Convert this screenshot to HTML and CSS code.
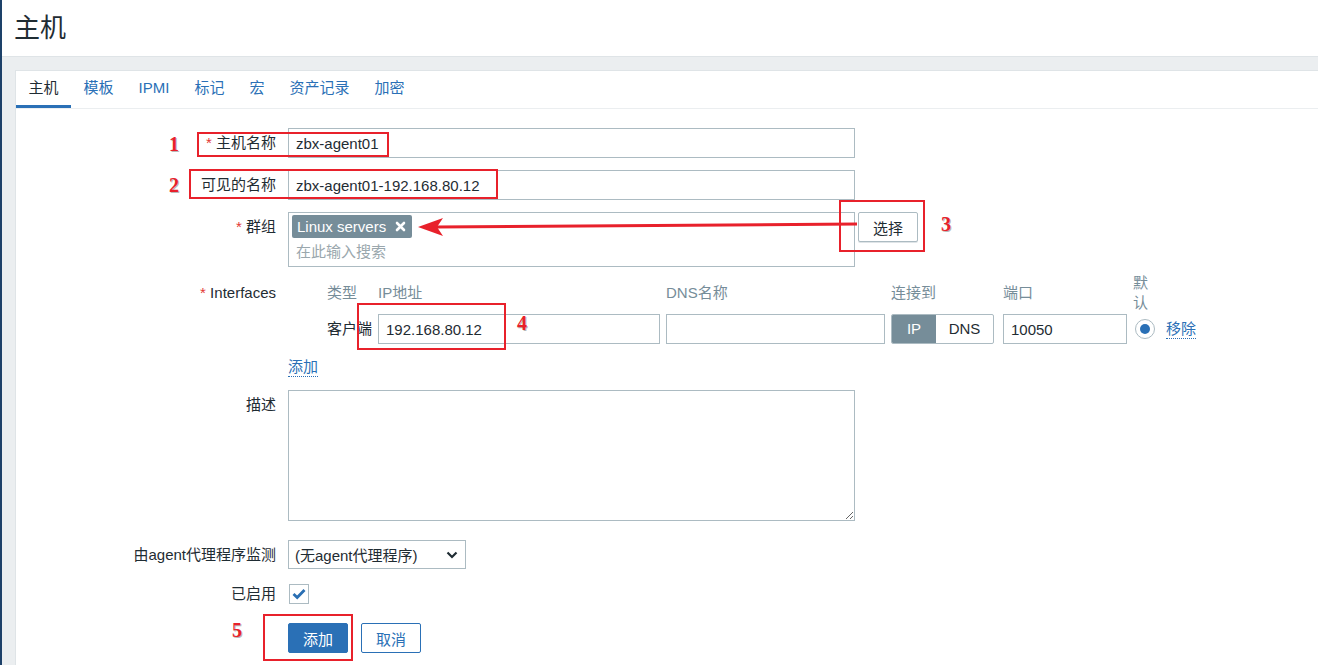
FILE: index.html
```html
<!DOCTYPE html>
<html lang="zh-CN">
<head>
  <meta charset="UTF-8" />
  <title>主机</title>
  <link rel="stylesheet" href="styles.css">
</head>
<body>
  <div class="app">
    <div class="sidebar-edge"></div>
    <main class="main">
      <header class="page-header">
        <h1>主机</h1>
      </header>

      <div class="content">
        <div class="panel">
          <ul class="tabs">
            <li class="tab active">主机</li>
            <li class="tab">模板</li>
            <li class="tab">IPMI</li>
            <li class="tab">标记</li>
            <li class="tab">宏</li>
            <li class="tab">资产记录</li>
            <li class="tab">加密</li>
          </ul>

          <form class="host-form">
            <div class="form-row">
              <label class="form-label"><span class="req">*</span> 主机名称</label>
              <div class="form-field"><input class="text-input wide" type="text" value="zbx-agent01"></div>
            </div>

            <div class="form-row">
              <label class="form-label">可见的名称</label>
              <div class="form-field"><input class="text-input wide" type="text" value="zbx-agent01-192.168.80.12"></div>
            </div>

            <div class="form-row row-groups">
              <label class="form-label"><span class="req">*</span> 群组</label>
              <div class="form-field field-inline">
                <div class="multiselect">
                  <span class="ms-tag">Linux servers
                    <svg class="ms-remove" width="11" height="11" viewBox="0 0 11 11"><path d="M2 2 L9 9 M9 2 L2 9" stroke="#fff" stroke-width="2.6" stroke-linecap="round"/></svg>
                  </span>
                  <div class="ms-placeholder">在此输入搜索</div>
                </div>
                <button type="button" class="btn-alt">选择</button>
              </div>
            </div>

            <div class="form-row row-interfaces">
              <label class="form-label label-iface"><span class="req">*</span> Interfaces</label>
              <div class="form-field">
                <div class="iface-table">
                  <div class="iface-head">类型</div>
                  <div class="iface-head">IP地址</div>
                  <div class="iface-head">DNS名称</div>
                  <div class="iface-head">连接到</div>
                  <div class="iface-head">端口</div>
                  <div class="iface-head">默认</div>
                  <div class="iface-head"></div>

                  <div class="iface-type">客户端</div>
                  <input class="text-input" type="text" value="192.168.80.12">
                  <input class="text-input" type="text" value="">
                  <div class="toggle">
                    <span class="toggle-item on">IP</span>
                    <span class="toggle-item">DNS</span>
                  </div>
                  <input class="text-input" type="text" value="10050">
                  <div class="radio"><span class="radio-dot"></span></div>
                  <a class="link">移除</a>
                </div>
                <a class="link add-link">添加</a>
              </div>
            </div>

            <div class="form-row row-desc">
              <label class="form-label">描述</label>
              <div class="form-field"><textarea class="textarea"></textarea></div>
            </div>

            <div class="form-row row-proxy">
              <label class="form-label">由agent代理程序监测</label>
              <div class="form-field">
                <div class="select">
                  <span>(无agent代理程序)</span>
                  <svg width="12" height="8" viewBox="0 0 12 8"><path d="M1.5 1.5 L6 6 L10.5 1.5" fill="none" stroke="#1f2c33" stroke-width="2.2"/></svg>
                </div>
              </div>
            </div>

            <div class="form-row row-enabled">
              <label class="form-label label-small">已启用</label>
              <div class="form-field">
                <div class="checkbox">
                  <svg width="14" height="12" viewBox="0 0 14 12"><path d="M1.5 6 L5.2 9.5 L12.5 2" fill="none" stroke="#2a6fb3" stroke-width="2.8"/></svg>
                </div>
              </div>
            </div>

            <div class="form-row">
              <div class="form-label"></div>
              <div class="form-field buttons">
                <button type="button" class="btn-main">添加</button>
                <button type="button" class="btn-cancel">取消</button>
              </div>
            </div>
          </form>
        </div>
      </div>
    </main>
  </div>

  <!-- red markup drawn over the screenshot -->
  <div class="annotations">
    <div class="mark-box" style="left:197px;top:132px;width:192px;height:25px"></div>
    <div class="mark-box" style="left:189px;top:169px;width:309px;height:30px"></div>
    <div class="mark-box" style="left:839px;top:200px;width:86px;height:52px"></div>
    <div class="mark-box" style="left:357px;top:303px;width:149px;height:47px"></div>
    <div class="mark-box" style="left:263px;top:614px;width:90px;height:47px"></div>

    <span class="mark-num" style="left:169px;top:134px">1</span>
    <span class="mark-num" style="left:169px;top:175px">2</span>
    <span class="mark-num" style="left:941px;top:214px">3</span>
    <span class="mark-num" style="left:517px;top:313px">4</span>
    <span class="mark-num" style="left:232px;top:620px">5</span>

    <svg class="mark-arrow" width="1318" height="665" viewBox="0 0 1318 665">
      <path d="M857 224 L436 227" stroke="#e8212b" stroke-width="3" fill="none"/>
      <path d="M418 227 L443 218 L437 227 L443 236 Z" fill="#e8212b"/>
    </svg>
  </div>
</body>
</html>
```

FILE: styles.css
```css
body {
  margin: 0;
  font-family: "Liberation Sans", Arial, "Noto Sans CJK SC", sans-serif;
  font-size: 15px;
  color: #1f2c33;
  overflow: hidden;
}

.app {
  display: flex;
  width: 1318px;
  height: 665px;
}

.sidebar-edge {
  width: 2px;
  background: #1d4169;
}

.main {
  flex: 1;
  display: flex;
  flex-direction: column;
}

.page-header {
  height: 56px;
  border-bottom: 1px solid #dfe4e7;
  background: #fff;
}

.page-header h1 {
  margin: 0;
  padding-left: 12px;
  font-size: 26px;
  font-weight: normal;
  line-height: 56px;
}

.content {
  flex: 1;
  background: #ebeef0;
  padding: 13px 0 0 13px;
}

.panel {
  background: #fff;
  border-top: 1px solid #dfe4e7;
  border-left: 1px solid #dfe4e7;
  height: 100%;
}

.tabs {
  display: flex;
  margin: 0;
  padding: 0;
  list-style: none;
  border-bottom: 1px solid #ebeef0;
}

.tab {
  padding: 0 12.5px 3px;
  line-height: 34px;
  color: #2a70b6;
}

.tab.active {
  color: #1f2c33;
  box-shadow: inset 0 -3px 0 #2a70b6;
}

.host-form {
  padding-top: 19px;
}

.form-row {
  display: flex;
  margin-bottom: 12px;
}

.form-label {
  width: 260px;
  margin-right: 12px;
  text-align: right;
  line-height: 30px;
  white-space: nowrap;
}

.req {
  color: #e33734;
}

.text-input {
  box-sizing: border-box;
  height: 30px;
  padding: 0 7px;
  border: 1px solid #acbbc2;
  border-radius: 0;
  font: inherit;
  color: #1f2c33;
  outline: none;
}

.text-input.wide {
  width: 567px;
}

.field-inline {
  display: flex;
  align-items: flex-start;
}

.row-groups {
  margin-bottom: 7px;
}

.multiselect {
  box-sizing: border-box;
  width: 567px;
  height: 55px;
  border: 1px solid #acbbc2;
  padding: 2px 3px;
}

.ms-tag {
  display: inline-flex;
  align-items: center;
  gap: 9px;
  height: 23px;
  padding: 0 6px 0 5px;
  background: #768d99;
  color: #fff;
  border-radius: 2px;
}

.ms-placeholder {
  padding-left: 4px;
  margin-top: 3px;
  line-height: 22px;
  color: #9aa7ad;
}

.btn-alt {
  box-sizing: border-box;
  width: 60px;
  height: 30px;
  margin-left: 3px;
  background: #fff;
  border: 1px solid #acbbc2;
  border-radius: 2px;
  box-shadow: 0 1px 0 #dfe4e7;
  font: inherit;
  color: #1f2c33;
}

.label-iface {
  line-height: 20px;
  padding-top: 9px;
}

.row-interfaces {
  margin-bottom: 13px;
}

.iface-table {
  display: grid;
  grid-template-columns: 45px 282px 219px 106px 124px 27px auto;
  grid-template-rows: 38px 30px;
  column-gap: 6px;
  row-gap: 2px;
  margin-left: 39px;
  align-items: center;
}

.iface-head {
  color: #768d99;
  line-height: 20px;
}

.iface-type {
  line-height: 30px;
  white-space: nowrap;
}

.iface-table .text-input {
  width: 100%;
}

.toggle {
  display: flex;
  box-sizing: border-box;
  width: 103px;
  height: 30px;
  border: 1px solid #acbbc2;
  border-radius: 2px;
  overflow: hidden;
}

.toggle-item {
  flex: 1;
  text-align: center;
  line-height: 28px;
}

.toggle-item.on {
  flex: 0 0 44px;
  background: #768d99;
  color: #fff;
}

.radio {
  box-sizing: border-box;
  width: 20px;
  height: 20px;
  margin-left: 2px;
  border: 1px solid #acbbc2;
  border-radius: 50%;
  display: flex;
  align-items: center;
  justify-content: center;
}

.radio-dot {
  width: 10px;
  height: 10px;
  border-radius: 50%;
  background: #2a70b6;
}

.link {
  color: #2a70b6;
  border-bottom: 1px dotted #2a70b6;
  line-height: 18px;
  justify-self: start;
}

.add-link {
  display: inline-block;
  margin-top: 14px;
}

.textarea {
  box-sizing: border-box;
  display: block;
  width: 567px;
  height: 131px;
  border: 1px solid #acbbc2;
  font: inherit;
  outline: none;
}

.row-desc {
  margin-bottom: 19px;
}

.row-proxy {
  margin-bottom: 15px;
}

.select {
  box-sizing: border-box;
  display: flex;
  align-items: center;
  justify-content: space-between;
  width: 178px;
  height: 29px;
  padding: 0 7px 0 6px;
  border: 1px solid #acbbc2;
}

.row-proxy .form-label {
  line-height: 29px;
}

.row-enabled {
  margin-bottom: 19px;
}

.label-small {
  line-height: 20px;
}

.checkbox {
  box-sizing: border-box;
  width: 20px;
  height: 20px;
  margin-left: 1px;
  border: 1px solid #acbbc2;
  display: flex;
  align-items: center;
  justify-content: center;
}

.buttons {
  display: flex;
  gap: 13px;
}

.btn-main,
.btn-cancel {
  box-sizing: border-box;
  width: 60px;
  height: 30px;
  border-radius: 2px;
  font: inherit;
}

.btn-main {
  background: #2a70b6;
  border: 1px solid #2a70b6;
  color: #fff;
}

.btn-cancel {
  background: #fff;
  border: 1px solid #2a70b6;
  color: #2a70b6;
}

.annotations {
  position: absolute;
  left: 0;
  top: 0;
  width: 1318px;
  height: 665px;
  pointer-events: none;
}

.mark-box {
  position: absolute;
  box-sizing: border-box;
  border: 2px solid #e8212b;
}

.mark-num {
  position: absolute;
  font-family: "Liberation Serif", "Times New Roman", serif;
  font-weight: bold;
  font-size: 20px;
  line-height: 20px;
  color: #e8212b;
  text-shadow: 1px 1px 0 #b9b9b9;
}

.mark-arrow {
  position: absolute;
  left: 0;
  top: 0;
}
```
